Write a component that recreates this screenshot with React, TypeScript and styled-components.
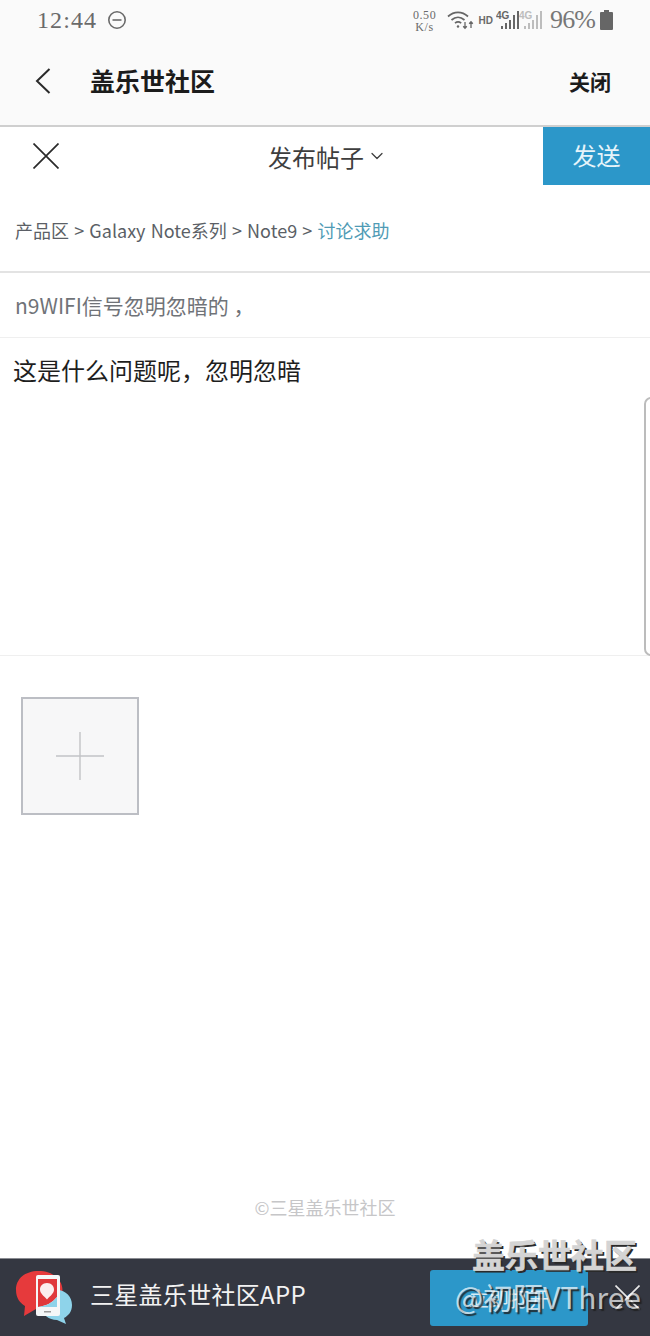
import React from "react";
import styled, { createGlobalStyle } from "styled-components";
import { ChevronDown } from "lucide-react";

const CJK = `"Noto Sans CJK SC", "Noto Sans", sans-serif`;
const SERIF = `"Liberation Serif", "DejaVu Serif", serif`;

const GlobalStyle = createGlobalStyle`
  html, body {
    margin: 0;
    padding: 0;
    background: #fff;
  }
  * {
    box-sizing: border-box;
  }
`;

const Page = styled.div`
  position: relative;
  width: 650px;
  height: 1336px;
  display: flex;
  flex-direction: column;
  overflow: hidden;
  font-family: ${CJK};
  background: #fff;
`;

const StatusBar = styled.div`
  height: 40px;
  flex: none;
  display: flex;
  align-items: center;
  justify-content: space-between;
  padding: 0 37px 0 37px;
  background: #fafafa;
  color: #6a6a6a;
  font-family: ${SERIF};
`;

const StatusGroup = styled.div`
  display: flex;
  align-items: center;
`;

const Clock = styled.span`
  font-size: 24px;
  letter-spacing: 1.1px;
  margin-right: 10px;
`;

const Speed = styled.span`
  font-size: 12px;
  line-height: 12px;
  letter-spacing: 0.6px;
  text-align: center;
  width: 26px;
  margin-right: 9px;
  margin-top: 1px;
`;

const Hd = styled.span`
  font-family: "Liberation Sans", sans-serif;
  font-size: 10px;
  font-weight: 700;
  margin: 0 3px 0 4px;
`;

const Battery = styled.span`
  font-size: 26px;
  letter-spacing: -0.9px;
  margin: 0 5px 0 8px;
  color: #777;
`;

const AppHeader = styled.header`
  height: 87px;
  flex: none;
  display: flex;
  align-items: center;
  padding: 0 39px 4px 35px;
  background: #fafafa;
  border-bottom: 2px solid #cfcfcf;
  color: #1c1c1c;
`;

const HeaderTitle = styled.h1`
  flex: 1;
  margin: 0 0 0 39px;
  font-size: 25px;
  line-height: 1;
  font-weight: 700;
`;

const HeaderClose = styled.span`
  font-size: 21px;
  font-weight: 700;
`;

const PostBar = styled.div`
  height: 58px;
  flex: none;
  display: flex;
  align-items: flex-start;
  background: #fff;
`;

const DismissSlot = styled.div`
  width: 225px;
  height: 58px;
  padding: 16px 0 0 33px;
  color: #2a2a2a;
`;

const PostTitle = styled.div`
  width: 318px;
  height: 58px;
  padding-left: 43px;
  display: flex;
  align-items: center;
  gap: 3px;
  font-size: 24px;
  color: #3e3e3e;
`;

const SendButton = styled.button`
  width: 107px;
  height: 58px;
  border: 0;
  padding: 0 0 4px;
  background: #2c97c9;
  color: #e6f4fa;
  font-family: ${CJK};
  font-size: 24px;
`;

const Breadcrumb = styled.div`
  height: 88px;
  flex: none;
  display: flex;
  align-items: center;
  padding: 3px 0 0 15px;
  font-size: 18px;
  word-spacing: 1.15px;
  white-space: pre;
  color: #5b5f66;
  border-bottom: 2px solid #e3e3e3;
`;

const CurrentCrumb = styled.span`
  color: #4f9bb5;
`;

const Subject = styled.div`
  height: 65px;
  flex: none;
  display: flex;
  align-items: center;
  padding: 0 0 0 15px;
  font-size: 21px;
  color: #707378;
  border-bottom: 1px solid #efefef;
`;

const Body = styled.div`
  height: 318px;
  flex: none;
  padding: 14px 13px 0;
  font-size: 24px;
  line-height: 36px;
  color: #1e1e1e;
  border-bottom: 1px solid #efefef;
`;

const Attachments = styled.div`
  flex: 1;
  padding: 41px 0 0 21px;
`;

const AddTile = styled.div`
  width: 118px;
  height: 118px;
  display: flex;
  align-items: center;
  justify-content: center;
  background: #f7f7f8;
  border: 2px solid #bcbec4;
`;

const Copyright = styled.div`
  flex: none;
  padding-bottom: 38px;
  text-align: center;
  font-size: 18px;
  line-height: 26px;
  color: #c6c6c8;
`;

const AppBanner = styled.div`
  height: 78px;
  flex: none;
  display: flex;
  align-items: center;
  padding: 0 10px 0 15px;
  background: #343741;
  border-top: 1px solid #8a8c92;
`;

const BannerName = styled.span`
  flex: 1;
  margin-left: 17px;
  margin-bottom: 8px;
  font-size: 24px;
  letter-spacing: 0.3px;
  color: #f2f2f2;
`;

const OpenButton = styled.div`
  width: 158px;
  height: 56px;
  margin: 1px 27px 0 0;
  display: flex;
  align-items: center;
  justify-content: center;
  border-radius: 3px;
  background: #2c97c9;
  color: #d5edf7;
  font-size: 20px;
`;

const BannerClose = styled.div`
  display: flex;
  color: #e8e8e8;
`;

// the site watermark stamped over the bottom of the screenshot
const WatermarkName = styled.div`
  position: absolute;
  right: 13px;
  top: 1234px;
  font-size: 33px;
  line-height: 40px;
  font-weight: 700;
  color: #d4d4d4;
  -webkit-text-stroke: 0.6px #d4d4d4;
  text-shadow: 2px 2px 0 #2a2a2a;
`;

const WatermarkUser = styled.div`
  position: absolute;
  right: 9px;
  top: 1276px;
  font-size: 30px;
  line-height: 40px;
  color: rgba(255, 255, 255, 0.7);
  text-shadow: 2px 2px 1px rgba(30, 30, 30, 0.85);
  white-space: nowrap;
`;

const EdgeHandle = styled.div`
  position: absolute;
  right: -8px;
  top: 397px;
  width: 14px;
  height: 259px;
  background: #fff;
  border: 2px solid #bcbcbc;
  border-radius: 9px;
`;

const DndIcon = () => (
  <svg width="20" height="20" viewBox="0 0 20 20" fill="none" stroke="#6a6a6a" strokeWidth="1.6">
    <circle cx="10" cy="10" r="8.2" />
    <path d="M5.5 10h9" />
  </svg>
);

const WifiIcon = () => (
  <svg width="28" height="20" viewBox="0 0 28 20" fill="none" stroke="#666" strokeWidth="1.7">
    <path d="M1 6.500C7 1 15 1 21 6.500" />
    <path d="M4.500 10c4-3.500 9-3.500 13 0" />
    <path d="M8 13.200c2-1.600 4.200-1.600 6.200 0" />
    <circle cx="11" cy="16.500" r="1.200" fill="#666" stroke="none" />
    <path d="M18 12v6M16.200 16.200l1.800 2 1.800-2M24 18v-6M22.200 13.800l1.800-2 1.800 2" strokeWidth="1.300" />
  </svg>
);

const SignalIcon = ({ faded }: { faded?: boolean }) => (
  <svg width="23" height="20" viewBox="0 0 23 20" fill={faded ? "#bdbdbd" : "#666"}>
    <text x="0" y="9" fontSize="10" fontWeight="700" fontFamily="Liberation Sans, sans-serif">4G</text>
    <rect x="5" y="16" width="2" height="3" />
    <rect x="9" y="13" width="2" height="6" />
    <rect x="13" y="10" width="2" height="9" />
    <rect x="17" y="5" width="2" height="14" />
    <rect x="21" y="1" width="2" height="18" />
  </svg>
);

const BatteryIcon = () => (
  <svg width="13" height="20" viewBox="0 0 13 20" fill="#666">
    <path d="M4 0h5v2h3a1 1 0 0 1 1 1v16a1 1 0 0 1-1 1H1a1 1 0 0 1-1-1V3a1 1 0 0 1 1-1h3z" />
  </svg>
);

const BackIcon = () => (
  <svg width="16" height="26" viewBox="0 0 16 26" fill="none" stroke="#2a2a2a" strokeWidth="2">
    <path d="M14.500 1 2 13l12.500 12" />
  </svg>
);

const CrossIcon = ({ size, weight }: { size: number; weight: number }) => (
  <svg width={size} height={size} viewBox={`0 0 ${size} ${size}`} fill="none" stroke="currentColor" strokeWidth={weight}>
    <path d={`M0.500 0.500 ${size - 0.5} ${size - 0.5}M${size - 0.5} 0.500 0.500 ${size - 0.5}`} />
  </svg>
);

const PlusIcon = () => (
  <svg width="48" height="48" viewBox="0 0 48 48" stroke="#c2c3c6" strokeWidth="1.400">
    <path d="M0 24h48M24 0v48" />
  </svg>
);

const AppLogo = () => (
  <svg width="58" height="56" viewBox="0 0 58 56">
    <path d="M26 1C11 0 1 8 1 20c0 8 4 13 9 16l-1 10 12-7c10 1 22-2 26-14C50 12 40 2 26 1z" fill="#e63a3c" />
    <path d="M42 20c9 0 15 7 15 15 0 7-4 11-8 13l2 6-9-4c-8 0-15-5-15-14 0-9 7-16 15-16z" fill="#8ed3ea" />
    <rect x="21" y="5" width="24" height="41" rx="2" fill="#f5f7f8" />
    <path d="M23 9h19v18c-5 6-11 9-19 10z" fill="#e0383b" />
    <path d="M23 37c8-1 14-4 19-10v10z" fill="#8ed3ea" />
    <path d="M32 13c4.500 0 7 3 7 6.500 0 4-3.500 6-7 10-3.500-4-7-6-7-10 0-3.500 2.500-6.500 7-6.500z" fill="#fbeeee" />
    <rect x="29" y="41" width="7" height="1.500" fill="#9a9a9a" />
  </svg>
);

export default function App() {
  return (
    <Page>
      <GlobalStyle />
      <StatusBar>
        <StatusGroup>
          <Clock>12:44</Clock>
          <DndIcon />
        </StatusGroup>
        <StatusGroup>
          <Speed>
            0.50
            <br />
            K/s
          </Speed>
          <WifiIcon />
          <Hd>HD</Hd>
          <SignalIcon />
          <SignalIcon faded />
          <Battery>96%</Battery>
          <BatteryIcon />
        </StatusGroup>
      </StatusBar>

      <AppHeader>
        <BackIcon />
        <HeaderTitle>盖乐世社区</HeaderTitle>
        <HeaderClose>关闭</HeaderClose>
      </AppHeader>

      <PostBar>
        <DismissSlot>
          <CrossIcon size={26} weight={1.7} />
        </DismissSlot>
        <PostTitle>
          发布帖子
          <ChevronDown size={20} strokeWidth={1.5} />
        </PostTitle>
        <SendButton>发送</SendButton>
      </PostBar>

      <Breadcrumb>
        产品区 &gt; Galaxy Note系列 &gt; Note9 &gt; <CurrentCrumb>讨论求助</CurrentCrumb>
      </Breadcrumb>
      <Subject>n9WIFI信号忽明忽暗的 ，</Subject>
      <Body>这是什么问题呢，忽明忽暗</Body>

      <Attachments>
        <AddTile>
          <PlusIcon />
        </AddTile>
      </Attachments>

      <Copyright>©三星盖乐世社区</Copyright>

      <AppBanner>
        <AppLogo />
        <BannerName>三星盖乐世社区APP</BannerName>
        <OpenButton>立即打开</OpenButton>
        <BannerClose>
          <CrossIcon size={25} weight={1.6} />
        </BannerClose>
      </AppBanner>

      <EdgeHandle />
      <WatermarkName>盖乐世社区</WatermarkName>
      <WatermarkUser>@初陌VThree</WatermarkUser>
    </Page>
  );
}
